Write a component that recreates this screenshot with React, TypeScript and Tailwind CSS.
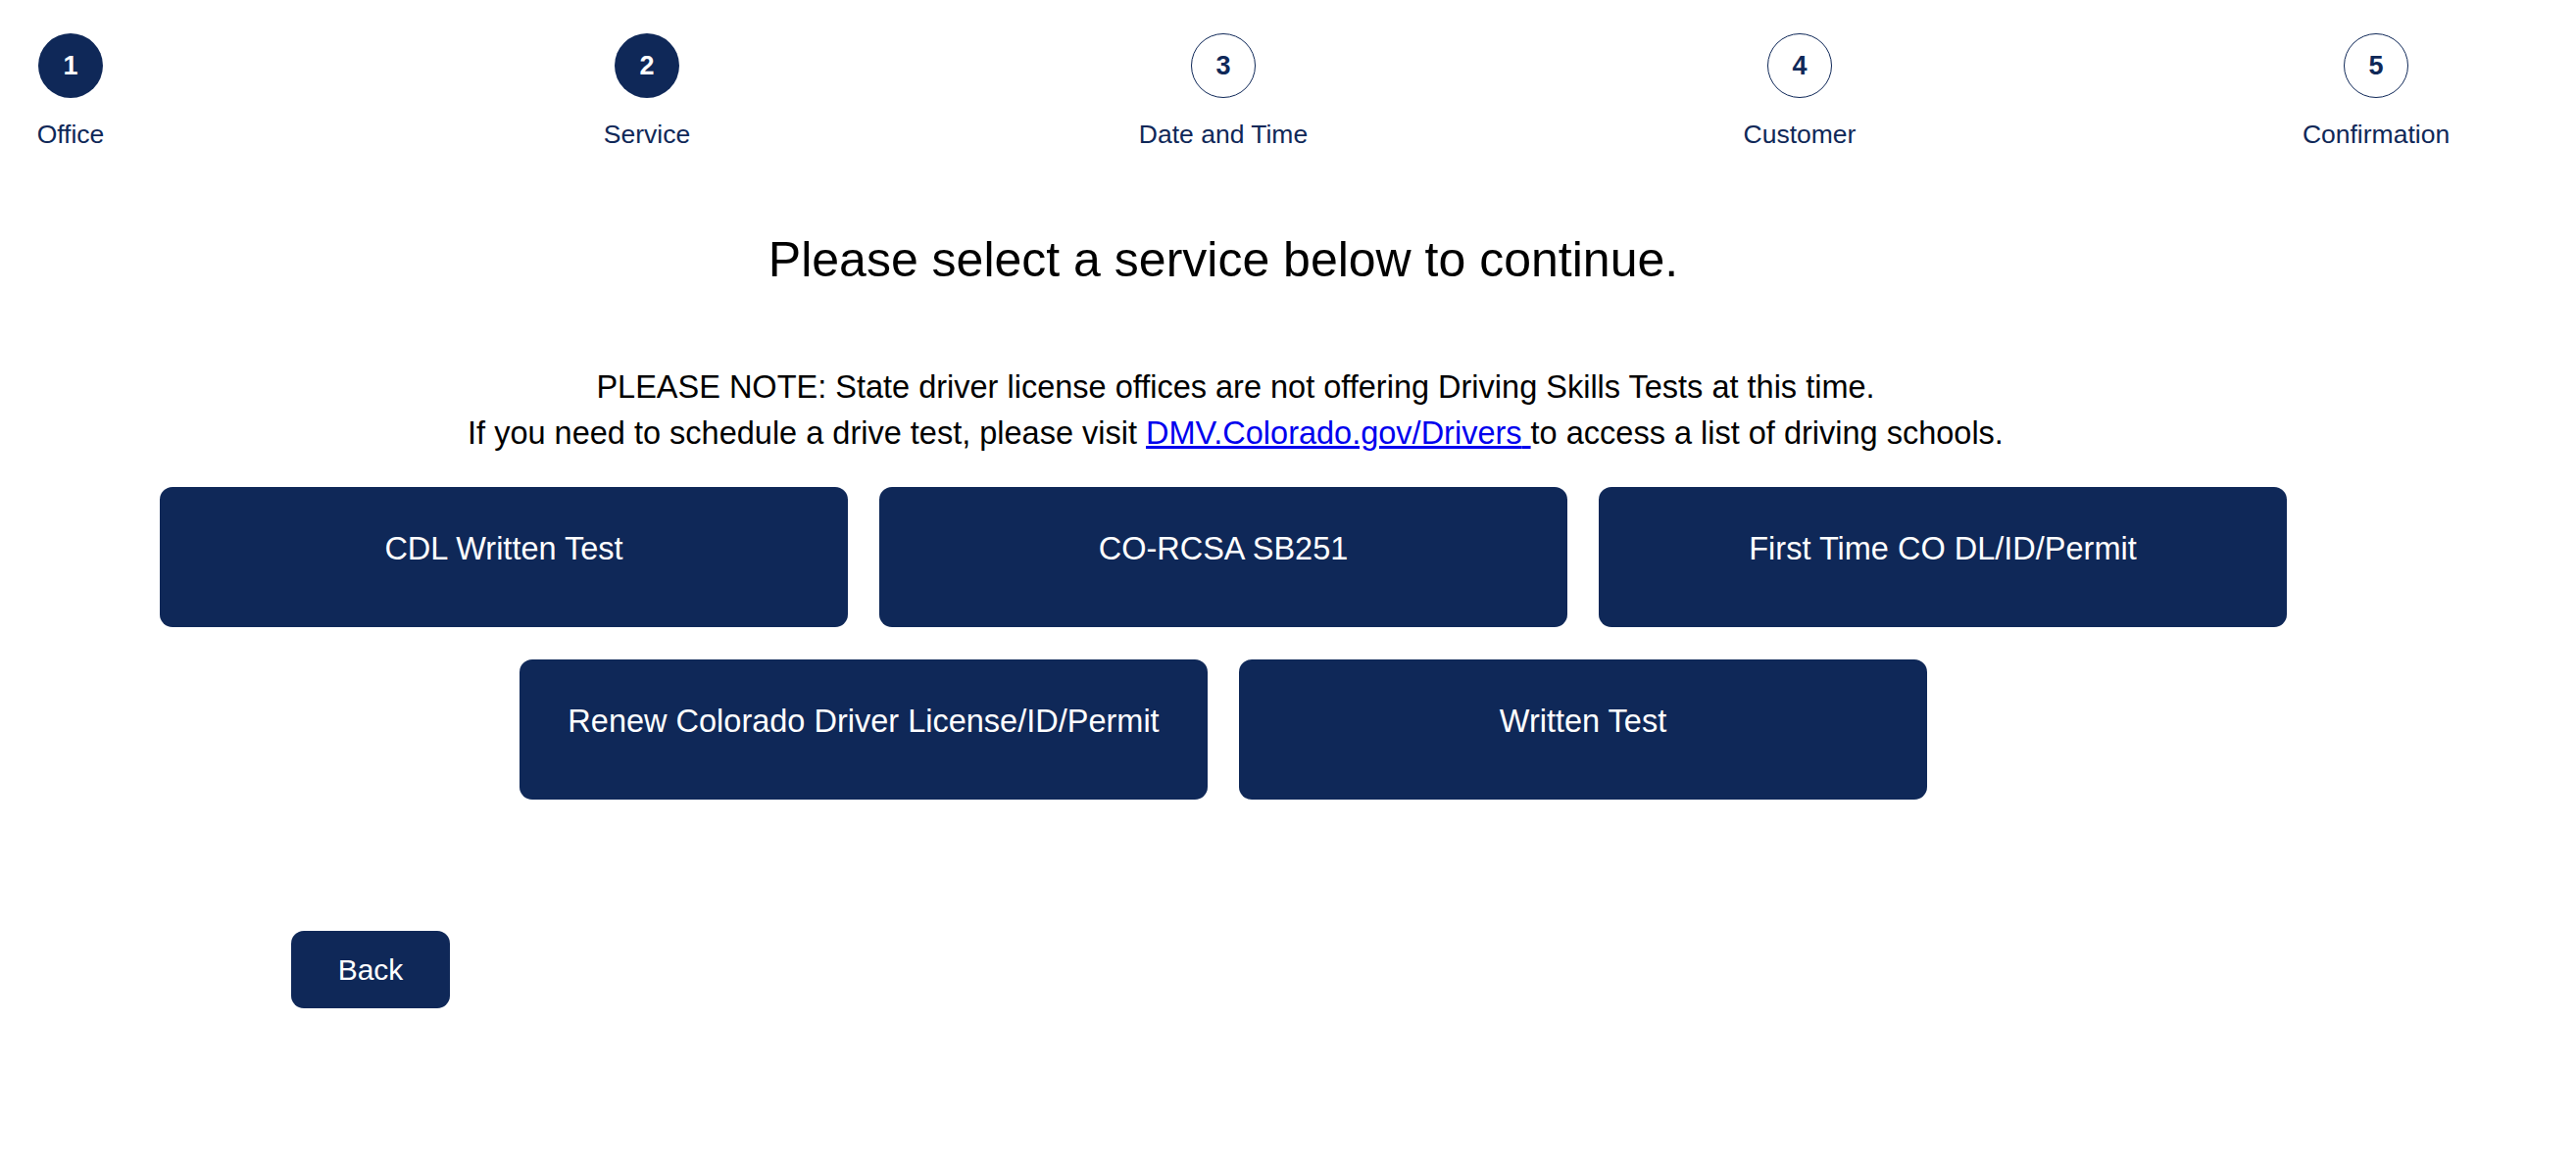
import React from "react";

const steps = [
  { n: 1, label: "Office", done: true },
  { n: 2, label: "Service", done: true },
  { n: 3, label: "Date and Time", done: false },
  { n: 4, label: "Customer", done: false },
  { n: 5, label: "Confirmation", done: false },
];

const services = [
  "CDL Written Test",
  "CO-RCSA SB251",
  "First Time CO DL/ID/Permit",
  "Renew Colorado Driver License/ID/Permit",
  "Written Test",
];

function StepBar() {
  return (
    <div className="flex justify-between pt-[34px]">
      {steps.map((s) => (
        <div key={s.n} className="flex w-[144px] flex-col items-center">
          <div
            className={
              s.done
                ? "flex h-[66px] w-[66px] items-center justify-center rounded-full bg-[#0f2858] text-[27px] font-bold text-white"
                : "flex h-[66px] w-[66px] items-center justify-center rounded-full border-[1.5px] border-[#0f2858] bg-white text-[27px] font-bold text-[#0f2858]"
            }
          >
            {s.n}
          </div>
          <span className="mt-[22px] whitespace-nowrap text-[26.5px] leading-[30px] text-[#0f2858]">
            {s.label}
          </span>
        </div>
      ))}
    </div>
  );
}

export default function App() {
  return (
    <div className="min-h-[1192px] bg-white font-['Liberation_Sans',Arial,sans-serif] text-black">
      <div className="w-[2496px]">
        <StepBar />

        <h1 className="mt-[84px] text-center text-[50px] leading-[58px]">
          Please select a service below to continue.
        </h1>

        <div className="mt-[78px] pl-[25px] text-center text-[32.5px] leading-[47px]">
          <p>PLEASE NOTE: State driver license offices are not offering Driving Skills Tests at this time.</p>
          <p>
            If you need to schedule a drive test, please visit{" "}
            <a href="#" className="text-[#0000ee] underline">
              DMV.Colorado.gov/Drivers{" "}
            </a>
            to access a list of driving schools.
          </p>
        </div>

        <div className="mt-[31px] flex flex-wrap justify-center gap-x-[32px] gap-y-[33px]">
          {services.map((name) => (
            <button
              key={name}
              className="flex w-[702px] flex-col items-center justify-start rounded-[13px] bg-[#0f2858] pt-[42px] pb-[59px] text-[32.5px] leading-[42px] text-white"
            >
              {name}
            </button>
          ))}
        </div>

        <div className="mt-[134px] pl-[297px]">
          <button className="h-[79px] w-[162px] rounded-[13px] bg-[#0f2858] text-[30px] text-white">
            Back
          </button>
        </div>
      </div>
    </div>
  );
}
